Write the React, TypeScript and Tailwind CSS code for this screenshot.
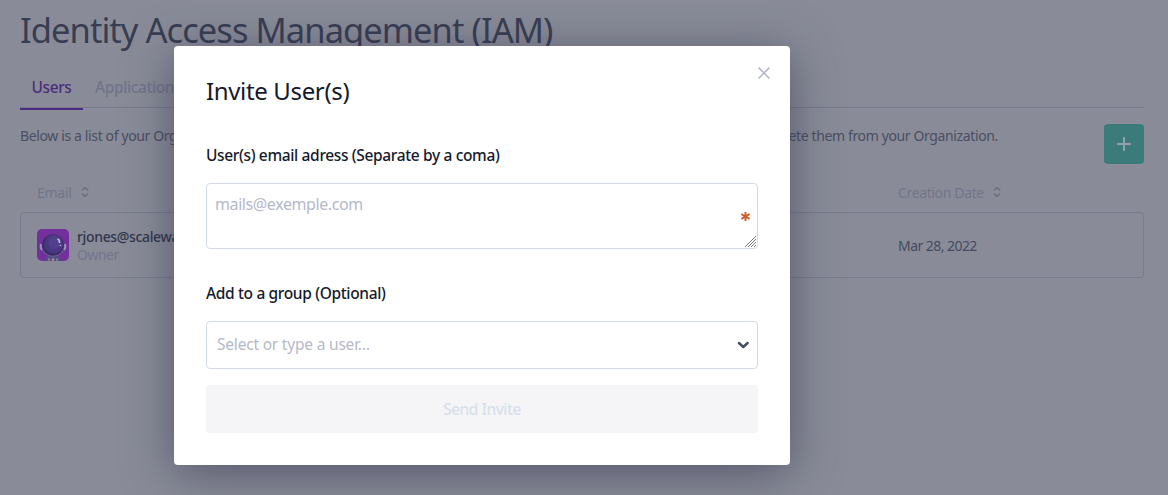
import type { ReactNode } from "react";

function Sort() {
  return (
    <svg className="ml-[9px] h-3 w-2" viewBox="0 0 8 12" fill="none" stroke="#696d82" strokeWidth="1.4" strokeLinecap="round" strokeLinejoin="round">
      <path d="M1.200 4 4 1.500l2.800 2.500M1.200 8 4 10.500l2.800-2.500" />
    </svg>
  );
}

function Avatar() {
  return (
    <svg className="h-8 w-8 shrink-0" viewBox="0 0 32 32">
      <rect width="32" height="32" rx="5" fill="#73309c" />
      <path d="M4 15q-1 4 1 6M28 15q1 4-1 6" stroke="#9a8fb4" strokeWidth="2" fill="none" />
      <path d="M8 32q0-6 8-6t8 6z" fill="#514d7c" />
      <path d="M5.500 20q3.500 7 10.500 7t10.500-7" stroke="#6b6495" strokeWidth="1.500" fill="none" />
      <circle cx="16" cy="16" r="10.800" fill="#3c2c69" />
      <circle cx="16.500" cy="15" r="9.500" fill="#483880" />
      <circle cx="18" cy="13.500" r="6.500" fill="#523f8b" />
      <path d="m20.500 10 1.500 1 .700 3M23.500 16v1" stroke="#c0bdd4" strokeWidth="1.600" fill="none" />
      <path d="M11 30.500h2M19 30.500h2" stroke="#8c83a6" strokeWidth="2" />
      <circle cx="16" cy="30.500" r="1.500" fill="#b07f90" />
    </svg>
  );
}

function Label({ children }: { children: ReactNode }) {
  return <div className="h-6 whitespace-nowrap text-[15.5px] leading-6 font-medium tracking-[-0.35px] text-[#151a2d]">{children}</div>;
}

export default function App() {
  return (
    <div className="relative h-[495px] w-[1168px] overflow-hidden bg-[#898c98] [font-family:'Noto_Sans','Open_Sans',sans-serif]">
      <main className="flex flex-col px-5 pt-[8px] pr-6">
        <h1 className="h-11 whitespace-nowrap text-[34.5px] leading-[44px] tracking-[-0.95px] text-[#383d52]">Identity Access Management (IAM)</h1>
        <nav className="mt-[14px] flex h-[42px] border-b border-[#777a8e] text-[15.5px] leading-[42px] font-medium tracking-[-0.4px]">
          <div className="h-[44px] w-[63px] border-b-2 border-[#4c2c7c] text-center text-[#4c2c7c]">Users</div>
          <div className="ml-3 text-[#70748a]">Applications</div>
        </nav>
        <div className="mt-4 flex h-10 justify-between text-[14px] tracking-[-0.37px] text-[#4a4e62]">
          <div className="flex h-6 w-[978px] justify-between whitespace-nowrap leading-6">
            <span>Below is a list of your Organization</span>
            <span>delete them from your Organization.</span>
          </div>
          <button className="flex size-10 items-center justify-center rounded bg-[#3b7b79]">
            <svg className="size-[14px]" viewBox="0 0 14 14" stroke="#979bab" strokeWidth="2"><path d="M0 7h14M7 0v14" /></svg>
          </button>
        </div>
        <div className="mt-[16px] flex h-6 items-center pl-[17px] text-[14px] text-[#71758a]">
          <div className="flex w-[861px] items-center tracking-[-0.25px]">Email<Sort /></div>
          <div className="flex items-center tracking-[-0.36px]">Creation Date<Sort /></div>
        </div>
        <div className="mt-[8px] flex h-[66px] items-center rounded border border-[#777b8f] pl-4 text-[14px] tracking-[-0.35px] text-[#454a60]">
          <div className="flex w-[861px] items-center gap-2">
            <Avatar />
            <div className="pt-[2px] leading-[18px]"><div className="font-medium text-[#30364c]">rjones@scaleway.com</div><div className="tracking-[-0.5px] text-[#71758a]">Owner</div></div>
          </div>
          <span className="tracking-[-0.55px]">Mar 28, 2022</span>
        </div>
      </main>
      <section className="absolute top-[46px] left-[174px] flex h-[419px] w-[616px] flex-col rounded bg-white px-8 pt-[27px] shadow-[0_8px_48px_rgba(50,48,75,0.6)]">
        <div className="flex h-9 justify-between">
          <h2 className="text-[24px] leading-9 tracking-[-0.35px] text-[#151a2d]">Invite User(s)</h2>
          <svg className="-mt-[6px] -mr-3 size-3" viewBox="0 0 12 12" stroke="#afb2c5" strokeWidth="1.5"><path d="m.5.500 11 11M11.500.500l-11 11" /></svg>
        </div>
        <div className="mt-[34px]"><Label>User(s) email adress (Separate by a coma)</Label></div>
        <div className="relative mt-4 h-[66px] shrink-0 rounded border border-[#d4dae7] px-2 pt-2 text-[16px] leading-6 tracking-[-0.4px] text-[#b5b9c9]">
          mails@exemple.com
          <svg className="absolute top-[28px] right-[7.5px] size-[9px]" viewBox="0 0 9 9" stroke="#d05a28" strokeWidth="1.9"><path d="M4.500 0v9M.300 2.100l8.400 4.800M8.700 2.100.300 6.900" /></svg>
          <svg className="absolute right-[1px] bottom-[1px] size-[11px]" viewBox="0 0 11 11" stroke="#777"><path d="M0 11 11 0M3 11l8-8M6 11l5-5M9 11l2-2" /></svg>
        </div>
        <div className="mt-8"><Label>Add to a group (Optional)</Label></div>
        <div className="mt-4 flex h-12 shrink-0 items-center justify-between rounded border border-[#d4dae7] pr-2 pb-[1px] pl-[10px] text-[15.5px] tracking-[-0.2px] text-[#b5b9c9]">
          <span>Select or type a user…</span>
          <svg className="mt-[1px] h-2 w-3" viewBox="0 0 12 8" fill="none" stroke="#484e63" strokeWidth="2.500" strokeLinecap="round" strokeLinejoin="round"><path d="m2 2 4.300 4 4.300-4" /></svg>
        </div>
        <button disabled className="mt-4 h-12 shrink-0 rounded bg-[#f5f5f7] pt-[2px] text-[15.5px] font-medium tracking-[-0.5px] text-[#d8dfec]">Send Invite</button>
      </section>
    </div>
  );
}
